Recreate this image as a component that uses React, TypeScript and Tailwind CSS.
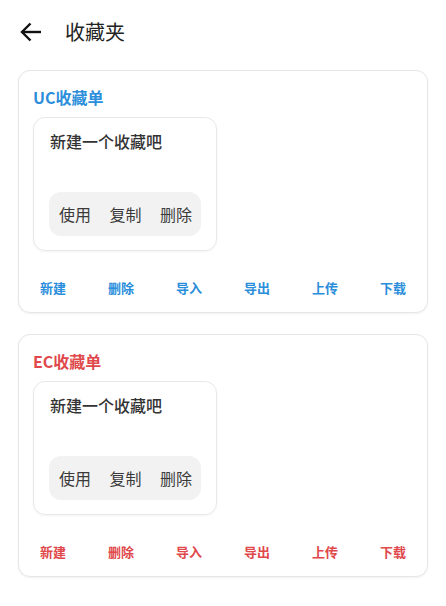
type Props = { name: string; color: string };

const actions = ["新建", "删除", "导入", "导出", "上传", "下载"];

function FavCard({ name, color }: Props) {
    return (
        <section className="rounded-[12px] border border-[#e6e6e6] bg-white shadow-[0_1px_2px_rgba(0,0,0,0.06)]">
            <div className="px-[14px] pt-[14px]">
                <h2 className="text-[16px] leading-[24px] font-bold" style={{ color }}>{name}</h2>
                <div className="mt-[8px] w-[184px] rounded-[12px] border border-[#e8e8e8] px-[15px] pt-[11px] pb-[14px] shadow-[0_1px_2px_rgba(0,0,0,0.05)]">
                    <p className="pl-px text-[16px] leading-[24px] font-medium text-[#333]">新建一个收藏吧</p>
                    <div className="mt-[39px] flex h-[44px] items-center justify-between rounded-[12px] bg-[#f2f2f2] pl-[10px] pr-[9px] text-[16px] text-[#3a3a3a]">
                        <span>使用</span>
                        <span>复制</span>
                        <span>删除</span>
                    </div>
                </div>
            </div>
            <div className="mt-[27px] mb-[14px] grid grid-cols-6">
                {actions.map((a) => (
                    <button key={a} className="text-center text-[13px] leading-[20px] font-bold" style={{ color }}>{a}</button>
                ))}
            </div>
        </section>
    );
}

export default function App() {
    return (
        <div className="min-h-[606px] w-[446px] bg-white font-['Noto_Sans_CJK_SC',sans-serif]">
            <header className="flex h-[64px] items-center pl-[20px]">
                {/* back arrow */}
                <svg width="21" height="20" viewBox="0 0 21 20" fill="none" stroke="#111" strokeWidth="2.4">
                    <path d="M21 10H3" />
                    <path d="M10.5 1.5 2 10l8.5 8.5" />
                </svg>
                <h1 className="ml-[24px] text-[20px] text-[#222]">收藏夹</h1>
            </header>
            <div className="flex flex-col gap-[21px] px-[18px] pt-[6px]">
                <FavCard name="UC收藏单" color="#2b8edb" />
                <FavCard name="EC收藏单" color="#e0484b" />
            </div>
        </div>
    );
}
